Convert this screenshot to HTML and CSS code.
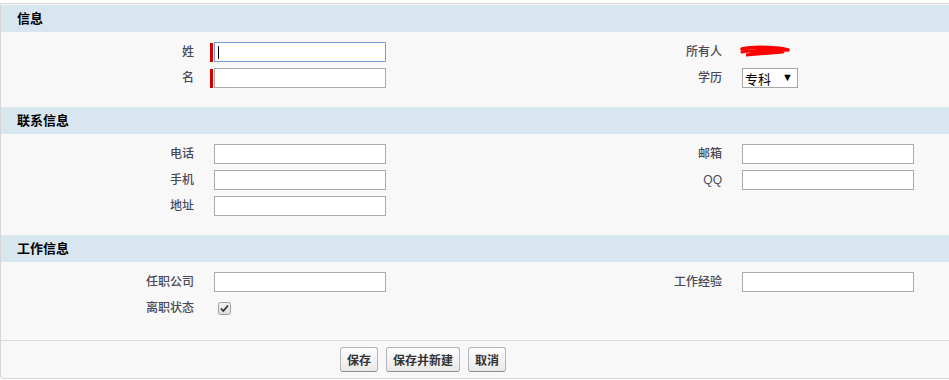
FILE: index.html
```html
<!DOCTYPE html>
<html lang="zh-CN">
<head>
  <meta charset="UTF-8">
  <title>编辑</title>
  <link rel="stylesheet" href="styles.css">
</head>
<body>

<div class="panel">

  <div class="sub-header">信息</div>
  <div class="fields">
    <label class="lbl" for="xing">姓</label>
    <div class="data req"><span class="req-bar"></span><input type="text" id="xing" class="txt focus"></div>
    <div class="lbl">所有人</div>
    <div class="data">
      <svg class="owner" width="52" height="14" viewBox="0 0 52 14">
        <path d="M3 5 C12 3, 24 3, 36 4 C42 4, 46 5, 49 6" stroke="#f00" stroke-width="3.5" fill="none" stroke-linecap="round"/>
        <path d="M3 8 C14 6, 28 6, 47 6 C32 8, 18 9, 7 11 C18 10, 32 9, 44 8" stroke="#f00" stroke-width="3" fill="none" stroke-linecap="round"/>
        <path d="M22 3 L40 3.5" stroke="#e00" stroke-width="1.5" fill="none"/>
      </svg>
    </div>

    <label class="lbl" for="ming">名</label>
    <div class="data req"><span class="req-bar"></span><input type="text" id="ming" class="txt"></div>
    <label class="lbl" for="xueli">学历</label>
    <div class="data">
      <span class="select-wrap">
        <select id="xueli" class="select">
          <option>专科</option>
          <option>本科</option>
          <option>硕士</option>
        </select>
        <span class="arrow">▼</span>
      </span>
    </div>
  </div>

  <div class="sub-header">联系信息</div>
  <div class="fields">
    <label class="lbl" for="dianhua">电话</label>
    <div class="data"><input type="text" id="dianhua" class="txt"></div>
    <label class="lbl" for="youxiang">邮箱</label>
    <div class="data"><input type="text" id="youxiang" class="txt"></div>

    <label class="lbl" for="shouji">手机</label>
    <div class="data"><input type="text" id="shouji" class="txt"></div>
    <label class="lbl" for="qq">QQ</label>
    <div class="data"><input type="text" id="qq" class="txt"></div>

    <label class="lbl" for="dizhi">地址</label>
    <div class="data"><input type="text" id="dizhi" class="txt"></div>
  </div>

  <div class="sub-header">工作信息</div>
  <div class="fields last">
    <label class="lbl" for="gongsi">任职公司</label>
    <div class="data"><input type="text" id="gongsi" class="txt"></div>
    <label class="lbl" for="jingyan">工作经验</label>
    <div class="data"><input type="text" id="jingyan" class="txt"></div>

    <div class="lbl">离职状态</div>
    <div class="data">
      <svg class="check" width="13" height="13" viewBox="0 0 13 13">
        <defs>
          <linearGradient id="cb" x1="0" y1="0" x2="0" y2="1">
            <stop offset="0" stop-color="#f4f4f4"/>
            <stop offset="1" stop-color="#dcdcdc"/>
          </linearGradient>
        </defs>
        <rect x="0.5" y="0.5" width="12" height="12" rx="2" fill="url(#cb)" stroke="#a0a0a0"/>
        <path d="M3 6.5 L5.3 9 L10 3.5" stroke="#333" stroke-width="1.8" fill="none"/>
      </svg>
    </div>
  </div>

  <div class="buttons">
    <button class="btn">保存</button>
    <button class="btn">保存并新建</button>
    <button class="btn">取消</button>
  </div>

</div>

</body>
</html>
```

FILE: styles.css
```css
body { margin: 0; background: #fff; font-family: "Liberation Sans", "Noto Sans CJK SC", sans-serif; font-size: 12px; }
.panel { margin-top: 3px; background: #f8f8f8; border: 1px solid #d6d6d6; border-right: none; border-radius: 0 0 0 4px; padding-top: 1px; }
.sub-header { height: 27px; line-height: 27px; background: #d8e6ef; padding-left: 16px; font-size: 13px; font-weight: bold; color: #000; }
.fields { display: grid; grid-template-columns: 203px 324px 204px 1fr; grid-auto-rows: 20px; row-gap: 6px; align-items: center; padding: 10px 0 19px; }
.fields.last { padding-bottom: 22px; }
.lbl { text-align: right; padding-right: 10px; color: #4a4a56; font-weight: 500; line-height: 18px; }
.data { display: flex; align-items: center; padding-left: 10px; height: 20px; }
.req-bar { width: 3px; height: 19px; background: #d40000; margin-left: -4px; margin-right: 1px; }
.txt { box-sizing: border-box; width: 172px; height: 20px; margin: 0; padding: 1px 3px; border: 1px solid #a9a9a9; background: #fff; font-size: 12px; }
.txt.focus { border-color: #7b9cd8; background: #fff linear-gradient(#000, #000) no-repeat 3px 3px / 1px 13px; }
.owner { margin-left: -3px; margin-top: -3px; }
.select-wrap { position: relative; display: inline-block; }
.select { appearance: none; -webkit-appearance: none; box-sizing: border-box; width: 56px; height: 20px; margin: 0; padding: 0 0 0 2px; border: 1px solid #a6a6a6; border-radius: 0; background: #fff; font-family: "Noto Sans CJK SC", sans-serif; font-size: 13px; color: #000; }
.arrow { position: absolute; right: 5px; top: 3px; font-size: 11px; color: #000; pointer-events: none; }
.check { margin-left: 4px; }
.buttons { border-top: 1px solid #dbdbdb; padding: 6px 0 6px 339px; display: flex; gap: 8px; }
.btn { height: 25px; padding: 0 6px; border: 1px solid #b5b5b5; border-bottom-color: #8f8f8f; border-radius: 3px; background: linear-gradient(#fdfdfd, #e9e9e9); font-family: "Liberation Sans", "Noto Sans CJK SC", sans-serif; font-size: 12px; font-weight: bold; color: #333; }
```
